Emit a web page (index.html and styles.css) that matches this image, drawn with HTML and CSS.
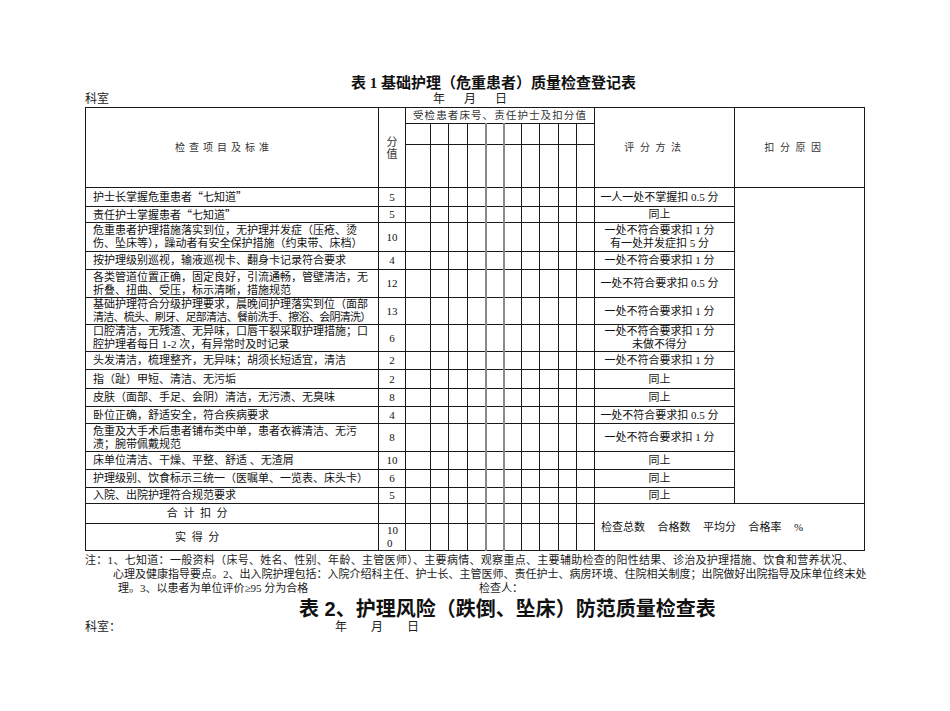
FILE: index.html
```html
<!DOCTYPE html>
<html lang="zh-CN">
<head>
<meta charset="utf-8">
<title>表1基础护理（危重患者）质量检查登记表</title>
<link rel="stylesheet" href="styles.css">
</head>
<body>
<div class="page">
  <h1 class="title1">表 1 基础护理（危重患者）质量检查登记表</h1>
  <div class="meta meta1"><span class="dept">科室</span><span class="date"><span>年</span><span>月</span><span>日</span></span></div>
  <table class="sheet">
    <colgroup>
      <col class="c-item"><col class="c-score">
      <col class="c-g1"><col class="c-g"><col class="c-g19"><col class="c-g"><col class="c-g gray"><col class="c-g"><col class="c-g"><col class="c-g19"><col class="c-g"><col class="c-g">
      <col class="c-method"><col class="c-reason">
    </colgroup>
    <thead>
      <tr class="h16">
        <th rowspan="3" class="th-item">检查项目及标准</th>
        <th rowspan="3" class="th-score">分<br>值</th>
        <th colspan="10" class="th-grid">受检患者床号、责任护士及扣分值</th>
        <th rowspan="3" class="th-method">评分方法</th>
        <th rowspan="3" class="th-reason">扣分原因</th>
      </tr>
      <tr class="h21"><td></td><td></td><td></td><td></td><td></td><td></td><td></td><td></td><td></td><td></td></tr>
      <tr class="h43"><td></td><td></td><td></td><td></td><td></td><td></td><td></td><td></td><td></td><td></td></tr>
    </thead>
    <tbody>
      <tr class="h19"><td class="item">护士长掌握危重患者<span class="q">“</span>七知道<span class="q">”</span></td><td class="score">5</td><td></td><td></td><td></td><td></td><td></td><td></td><td></td><td></td><td></td><td></td><td class="method">一人一处不掌握扣 0.5 分</td><td class="reason" rowspan="15"></td></tr>
      <tr class="h16"><td class="item">责任护士掌握患者<span class="q">“</span>七知道<span class="q">”</span></td><td class="score">5</td><td></td><td></td><td></td><td></td><td></td><td></td><td></td><td></td><td></td><td></td><td class="method">同上</td></tr>
      <tr class="h29"><td class="item">危重患者护理措施落实到位，无护理并发症（压疮、烫<br>伤、坠床等），躁动者有安全保护措施（约束带、床档）</td><td class="score">10</td><td></td><td></td><td></td><td></td><td></td><td></td><td></td><td></td><td></td><td></td><td class="method">一处不符合要求扣 1 分<br>有一处并发症扣 5 分</td></tr>
      <tr class="h18"><td class="item">按护理级别巡视，输液巡视卡、翻身卡记录符合要求</td><td class="score">4</td><td></td><td></td><td></td><td></td><td></td><td></td><td></td><td></td><td></td><td></td><td class="method">一处不符合要求扣 1 分</td></tr>
      <tr class="h28"><td class="item">各类管道位置正确，固定良好，引流通畅，管壁清洁，无<br>折叠、扭曲、受压，标示清晰，措施规范</td><td class="score">12</td><td></td><td></td><td></td><td></td><td></td><td></td><td></td><td></td><td></td><td></td><td class="method">一处不符合要求扣 0.5 分</td></tr>
      <tr class="h26"><td class="item">基础护理符合分级护理要求，晨晚间护理落实到位（面部<br><span class="tight">清洁、梳头、刷牙、足部清洁、餐前洗手、擦浴、会阴清洗）</span></td><td class="score">13</td><td></td><td></td><td></td><td></td><td></td><td></td><td></td><td></td><td></td><td></td><td class="method">一处不符合要求扣 1 分</td></tr>
      <tr class="h27"><td class="item">口腔清洁，无残渣、无异味，口唇干裂采取护理措施；口<br>腔护理者每日 1-2 次，有异常时及时记录</td><td class="score">6</td><td></td><td></td><td></td><td></td><td></td><td></td><td></td><td></td><td></td><td></td><td class="method">一处不符合要求扣 1 分<br>未做不得分</td></tr>
      <tr class="h18"><td class="item">头发清洁，梳理整齐，无异味；胡须长短适宜，清洁</td><td class="score">2</td><td></td><td></td><td></td><td></td><td></td><td></td><td></td><td></td><td></td><td></td><td class="method">一处不符合要求扣 1 分</td></tr>
      <tr class="h19"><td class="item">指（趾）甲短、清洁、无污垢</td><td class="score">2</td><td></td><td></td><td></td><td></td><td></td><td></td><td></td><td></td><td></td><td></td><td class="method">同上</td></tr>
      <tr class="h18"><td class="item">皮肤（面部、手足、会阴）清洁，无污渍、无臭味</td><td class="score">8</td><td></td><td></td><td></td><td></td><td></td><td></td><td></td><td></td><td></td><td></td><td class="method">同上</td></tr>
      <tr class="h17"><td class="item">卧位正确，舒适安全，符合疾病要求</td><td class="score">4</td><td></td><td></td><td></td><td></td><td></td><td></td><td></td><td></td><td></td><td></td><td class="method">一处不符合要求扣 0.5 分</td></tr>
      <tr class="h28"><td class="item">危重及大手术后患者铺布类中单，患者衣裤清洁、无污<br>渍；腕带佩戴规范</td><td class="score">8</td><td></td><td></td><td></td><td></td><td></td><td></td><td></td><td></td><td></td><td></td><td class="method">一处不符合要求扣 1 分</td></tr>
      <tr class="h18"><td class="item">床单位清洁、干燥、平整、舒适 、无渣屑</td><td class="score">10</td><td></td><td></td><td></td><td></td><td></td><td></td><td></td><td></td><td></td><td></td><td class="method">同上</td></tr>
      <tr class="h18"><td class="item">护理级别、饮食标示三统一（医嘱单、一览表、床头卡）</td><td class="score">6</td><td></td><td></td><td></td><td></td><td></td><td></td><td></td><td></td><td></td><td></td><td class="method">同上</td></tr>
      <tr class="h16"><td class="item">入院、出院护理符合规范要求</td><td class="score">5</td><td></td><td></td><td></td><td></td><td></td><td></td><td></td><td></td><td></td><td></td><td class="method">同上</td></tr>
      <tr class="h20"><td class="total">合计扣分</td><td class="score"></td><td></td><td></td><td></td><td></td><td></td><td></td><td></td><td></td><td></td><td></td><td class="summary" colspan="2" rowspan="2"><span>检查总数</span><span>合格数</span><span>平均分</span><span>合格率</span><span>%</span></td></tr>
      <tr class="h26"><td class="total">实得分</td><td class="score"><span class="wrapnum">10<br>0</span></td><td></td><td></td><td></td><td></td><td></td><td></td><td></td><td></td><td></td><td></td></tr>
    </tbody>
  </table>
  <div class="notes">
    <div class="n1">注：1、七知道：一般资料（床号、姓名、性别、年龄、主管医师）、主要病情、观察重点、主要辅助检查的阳性结果、诊治及护理措施、饮食和营养状况、</div>
    <div class="n2">心理及健康指导要点。2、出入院护理包括：入院介绍科主任、护士长、主管医师、责任护士、病房环境、住院相关制度；出院做好出院指导及床单位终末处</div>
    <div class="n3"><span class="n3a">理。3、以患者为单位评价≥95 分为合格</span><span>检查人：</span></div>
  </div>
  <h2 class="title2">表 2、护理风险（跌倒、坠床）防范质量检查表</h2>
  <div class="meta meta2"><span class="dept">科室：</span><span class="date"><span>年</span><span>月</span><span>日</span></span></div>
</div>
</body>
</html>
```
FILE: styles.css
```css
html, body {
  margin: 0;
  padding: 0;
  background: #fff;
}
body {
  font-family: "Liberation Serif", "Noto Sans CJK SC", serif;
  color: #111;
  font-size: 11px;
  line-height: 13px;
}
.page {
  width: 780px;
  padding: 74px 0 0 85px;
}
.title1 {
  margin: 0;
  padding-left: 266px;
  font-size: 15px;
  line-height: 18px;
  font-weight: bold;
  white-space: nowrap;
}
.meta {
  display: flex;
  font-size: 12px;
  line-height: 15px;
  height: 15px;
  color: #222;
}
.meta1 .dept { width: 348px; }
.meta1 .date { display: flex; gap: 19px; }
.meta2 .dept { width: 250px; }
.meta2 .date { display: flex; gap: 24px; }

.sheet {
  border-collapse: collapse;
  table-layout: fixed;
  width: 779px;
}
.sheet td, .sheet th {
  border: 1px solid #1a1a1a;
  padding: 0;
  font-weight: normal;
  vertical-align: middle;
}
.c-item { width: 293px; }
.c-score { width: 27px; }
.c-g1 { width: 25px; }
.c-g { width: 18px; }
.c-g19 { width: 19px; }
.c-method { width: 140px; }
.c-reason { width: 130px; }
col.gray { border-left: 2px solid #8a8a8a; border-right: 2px solid #8a8a8a; }

.h16 { height: 16px; }
.h17 { height: 17px; }
.h18 { height: 18px; }
.h19 { height: 19px; }
.h20 { height: 20px; }
.h21 { height: 21px; }
.h26 { height: 26px; }
.h27 { height: 27px; }
.h28 { height: 28px; }
.h29 { height: 29px; }
.h43 { height: 43px; }

.sheet th {
  color: #333;
  font-size: 10px;
}
.sheet .th-item {
  letter-spacing: 4px;
  padding-right: 16px;
}
.sheet .th-score {
  font-size: 11px;
  line-height: 12px;
}
.sheet .th-grid {
  font-size: 10.5px;
  letter-spacing: 1.1px;
  line-height: 14px;
}
.sheet .th-method {
  letter-spacing: 5.6px;
  padding-right: 18px;
}
.sheet .th-reason {
  letter-spacing: 5.6px;
  padding-right: 8px;
}

.sheet .item {
  padding: 0 4px 0 7px;
  white-space: nowrap;
  text-align: left;
}
.q { font-family: "Noto Sans CJK SC", sans-serif; }
.tight { letter-spacing: -0.72px; }
.sheet .score {
  text-align: center;
}
.wrapnum {
  display: inline-block;
  text-align: left;
  padding-left: 1px;
}
.sheet .method {
  text-align: center;
  padding: 0 12px 0 2px;
  white-space: nowrap;
}
.sheet .total {
  text-align: center;
  letter-spacing: 5.6px;
  padding-right: 64px;
}
.sheet .summary {
  text-align: left;
  padding-left: 6px;
  white-space: nowrap;
}
.summary span + span { margin-left: 12.5px; }

.notes {
  margin-top: 2px;
  font-size: 11px;
  line-height: 14px;
  white-space: nowrap;
  color: #1a1a1a;
}
.n1 { letter-spacing: 0.3px; }
.n2 { padding-left: 28px; }
.n3 { padding-left: 33px; display: flex; }
.n3a { width: 361px; }

.title2 {
  margin: 3px 0 0;
  padding-left: 214px;
  font-size: 20px;
  line-height: 22px;
  font-weight: bold;
  white-space: nowrap;
  font-family: "Liberation Sans", "Noto Sans CJK SC", sans-serif;
}
```
